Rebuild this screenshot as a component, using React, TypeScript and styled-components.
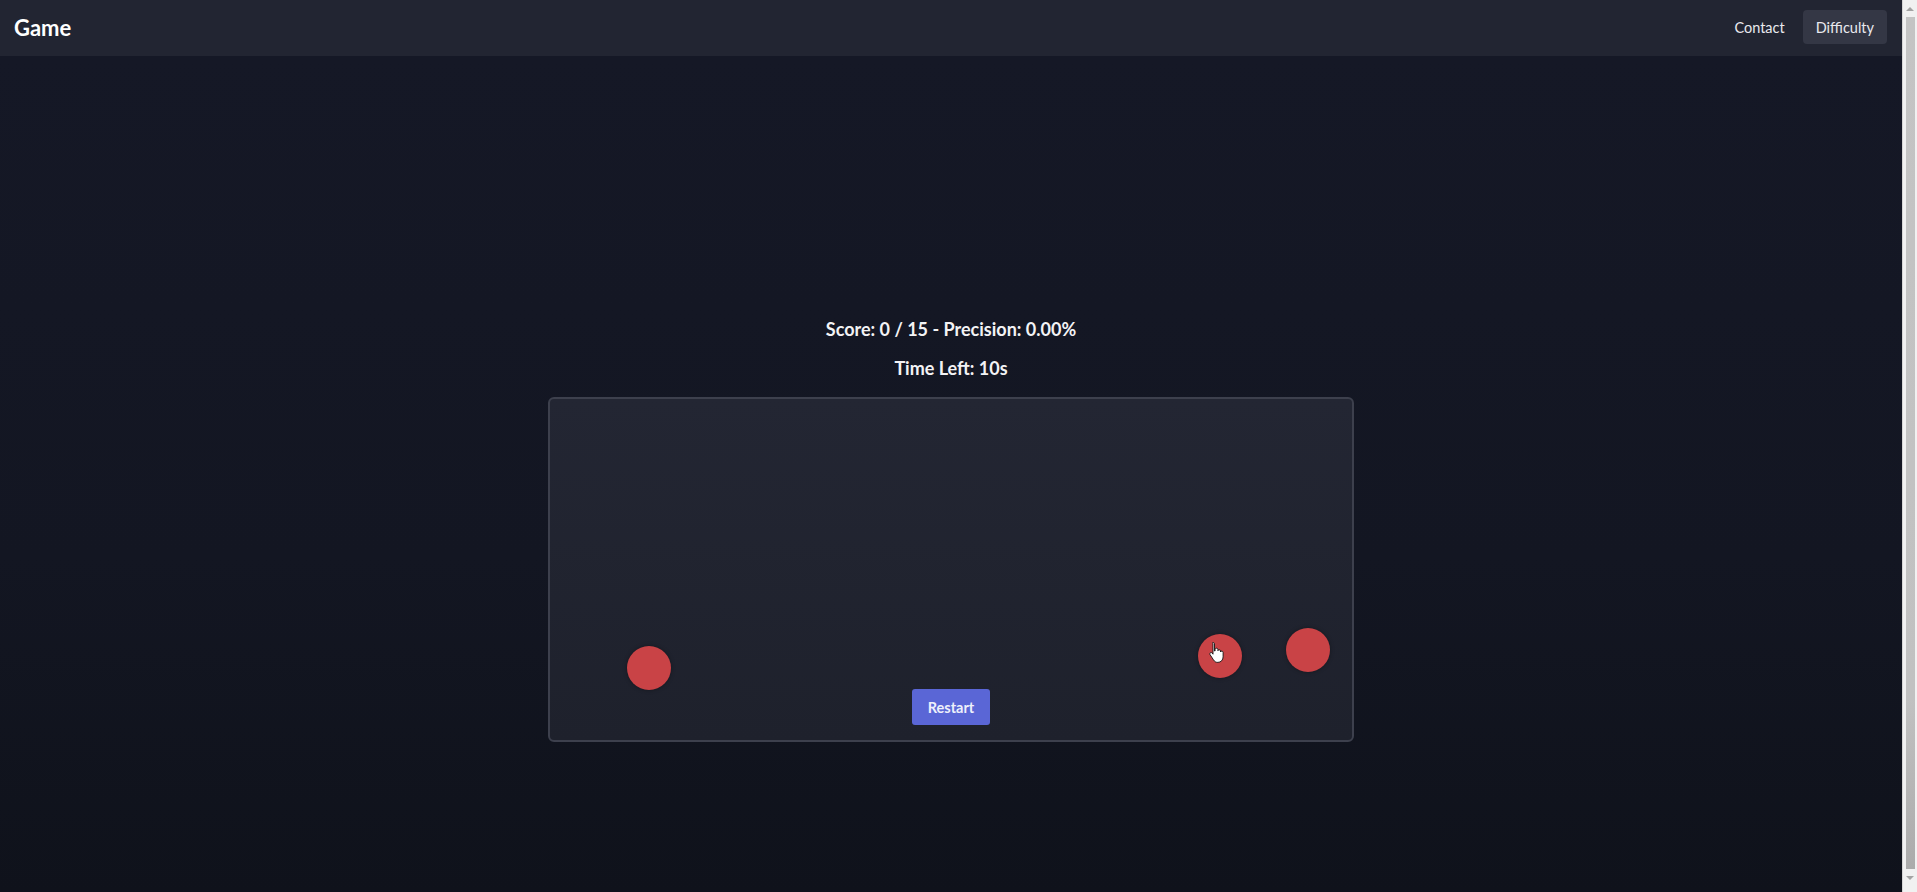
import React from 'react';
import styled, { createGlobalStyle } from 'styled-components';

const GlobalStyle = createGlobalStyle`
  html {
    background: #10131c;
  }
  body {
    margin: 0;
    overflow: hidden;
    font-family: Lato, "Open Sans", "Liberation Sans", sans-serif;
    color: #f1f1f3;
  }
`;

const Page = styled.div`
  min-height: 100vh;
  margin-right: 15px;
  display: flex;
  flex-direction: column;
`;

const Header = styled.header`
  height: 56px;
  flex-shrink: 0;
  background: #222532;
  box-shadow: 0 1px 3px rgba(0, 0, 0, 0.35);
  display: flex;
  align-items: center;
  justify-content: space-between;
  padding: 0 15px 2px 14px;
  box-sizing: border-box;
`;

const Brand = styled.div`
  font-size: 22px;
  font-weight: 700;
  color: #ffffff;
`;

const Nav = styled.nav`
  display: flex;
  align-items: center;
  gap: 5px;
`;

const NavItem = styled.button<{ $active?: boolean }>`
  font-family: inherit;
  font-size: 14.5px;
  color: #e9e9ee;
  border: none;
  border-radius: 4px;
  height: 34px;
  padding: 0 13px;
  background: ${(p) => (p.$active ? '#343745' : 'transparent')};
  cursor: pointer;
`;

const Main = styled.main`
  flex: 1;
  background: linear-gradient(180deg, #151826 0%, #131622 60%, #0f121b 100%);
  display: flex;
  flex-direction: column;
  align-items: center;
  padding-top: 260px;
  box-sizing: border-box;
`;

const StatLine = styled.div<{ $gap?: number }>`
  font-size: 18px;
  font-weight: 700;
  line-height: 27px;
  margin-top: ${(p) => p.$gap ?? 0}px;
  color: #f3f3f5;
`;

const Arena = styled.div`
  position: relative;
  margin-top: 15px;
  width: 806px;
  height: 345px;
  box-sizing: border-box;
  border: 2px solid #3d404d;
  border-radius: 6px;
  background: linear-gradient(180deg, #232633 0%, #1e212c 100%);
  display: flex;
  flex-direction: column;
  justify-content: flex-end;
  align-items: center;
  padding-bottom: 15px;
`;

const Target = styled.div`
  position: absolute;
  width: 44px;
  height: 44px;
  border-radius: 50%;
  background: #c94346;
  box-shadow: 0 0 4px rgba(0, 0, 0, 0.35);
`;

const Cursor = styled.svg`
  position: absolute;
  width: 18px;
  height: 22px;
`;

const RestartButton = styled.button`
  font-family: inherit;
  font-size: 14.5px;
  font-weight: 700;
  color: #eef0fb;
  background: #5a66d6;
  border: none;
  border-radius: 3px;
  width: 78px;
  height: 36px;
  cursor: pointer;
`;

/* stand-in for the browser's vertical scrollbar */
const ScrollTrack = styled.div`
  position: fixed;
  top: 0;
  right: 0;
  width: 15px;
  height: 100vh;
  background: #f1f1f1;
  border-left: 1px solid #d6d6d6;
  box-sizing: border-box;
  display: flex;
  flex-direction: column;
  align-items: center;
`;

const ScrollArrow = styled.div<{ $down?: boolean }>`
  height: 17px;
  width: 100%;
  display: flex;
  align-items: center;
  justify-content: center;
  &::after {
    content: '';
    border-left: 4px solid transparent;
    border-right: 4px solid transparent;
    ${(p) =>
      p.$down ? 'border-top: 4px solid #a3a3a3;' : 'border-bottom: 4px solid #a3a3a3;'}
  }
`;

const ScrollThumb = styled.div`
  width: 9px;
  height: 852px;
  background: linear-gradient(180deg, #c4c4c4 0%, #c1c1c1 80%, #ababab 100%);
`;

const targets = [
  { x: 77, y: 247 },
  { x: 648, y: 235 },
  { x: 736, y: 229 },
];

export default function App() {
  return (
    <>
      <GlobalStyle />
      <Page>
        <Header>
          <Brand>Game</Brand>
          <Nav>
            <NavItem>Contact</NavItem>
            <NavItem $active>Difficulty</NavItem>
          </Nav>
        </Header>
        <Main>
          <StatLine>Score: 0 / 15 - Precision: 0.00%</StatLine>
          <StatLine $gap={12}>Time Left: 10s</StatLine>
          <Arena>
            {targets.map((t, i) => (
              <Target key={i} style={{ left: t.x, top: t.y }} />
            ))}
            <Cursor viewBox="0 0 18 22" style={{ left: 658, top: 242 }}>
              <path
                d="M5 1.5c.9 0 1.5.6 1.5 1.5v7l.6-.1V8.5c0-.8.6-1.3 1.4-1.3s1.4.5 1.4 1.3v1.2c.2-.7.7-1 1.3-1 .8 0 1.3.5 1.3 1.3v1c.2-.6.7-.9 1.3-.9.8 0 1.3.6 1.3 1.4v4.3c0 3.2-2.2 5.6-5.4 5.6H9.8c-2 0-3.3-.9-4.3-2.5L2 13.6c-.4-.7-.2-1.5.5-1.9.6-.3 1.3-.1 1.7.4l.8 1.1V3c0-.9-.9-1.5 0-1.5z"
                fill="#ffffff"
                stroke="#111"
                strokeWidth="0.9"
                strokeLinejoin="round"
              />
            </Cursor>
            <RestartButton>Restart</RestartButton>
          </Arena>
        </Main>
      </Page>
      <ScrollTrack>
        <ScrollArrow />
        <ScrollThumb />
        <ScrollArrow $down />
      </ScrollTrack>
    </>
  );
}
